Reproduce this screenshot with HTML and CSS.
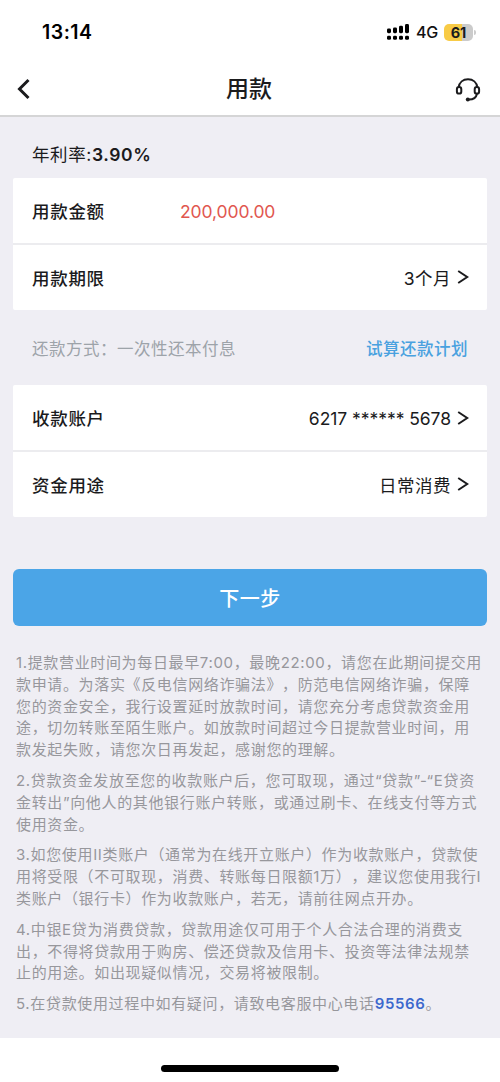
FILE: index.html
```html
<!DOCTYPE html>
<html lang="zh-CN">
<head>
<meta charset="utf-8">
<title>用款</title>
<link rel="stylesheet" href="styles.css">
</head>
<body>
<div class="screen">
  <div class="status">
    <span class="time">13:14</span>
    <div class="indicators">
      <svg class="signal" width="23" height="16" viewBox="0 0 23 16">
        <rect x="0" y="4.6" width="4" height="4.6" rx="1.4"/><rect x="6" y="3.4" width="4" height="5.800" rx="1.4"/><rect x="12" y="1.8" width="4" height="7.4" rx="1.4"/><rect x="18" y="0" width="4" height="9.2" rx="1.4"/>
        <rect x="0" y="11.8" width="4" height="4" rx="1.4"/><rect x="6" y="11.8" width="4" height="4" rx="1.4"/><rect x="12" y="11.8" width="4" height="4" rx="1.4"/><rect x="18" y="11.8" width="4" height="4" rx="1.4"/>
      </svg>
      <span class="network">4G</span>
      <span class="battery">61</span>
      <span class="battery-tip"></span>
    </div>
  </div>
  <header class="nav">
    <svg class="back" width="14" height="22" viewBox="0 0 14 22"><path d="M11.5 2 2.5 11l9 9"/></svg>
    <h1 class="title">用款</h1>
    <svg class="headset" width="26" height="26" viewBox="0 0 26 26">
      <path d="M3.7 10.200C4.3 5.400 8 2.300 13 2.300s8.700 3.100 9.300 7.900"/>
      <rect x="1.900" y="10" width="4.400" height="6.600" rx="2.200"/>
      <rect x="19.700" y="10" width="4.400" height="6.600" rx="2.200"/>
      <path d="M22 16.700c-.8 3.800-3.700 5.900-8 5.900"/>
      <circle class="mic" cx="12.800" cy="22.400" r="2"/>
    </svg>
  </header>
  <main class="content">
    <div class="rate">年利率:<b>3.90%</b></div>
    <section class="card">
      <div class="row"><span class="label">用款金额</span><span class="amount">200,000.00</span></div>
      <div class="row"><span class="label">用款期限</span><span class="value">3个月</span><svg class="chevron" width="12" height="16" viewBox="0 0 12 16"><path d="m1.200 2 9 6-9 6"/></svg></div>
    </section>
    <div class="method"><span>还款方式：一次性还本付息</span><a class="plan">试算还款计划</a></div>
    <section class="card">
      <div class="row"><span class="label">收款账户</span><span class="value account">6217 ****** 5678</span><svg class="chevron" width="12" height="16" viewBox="0 0 12 16"><path d="m1.200 2 9 6-9 6"/></svg></div>
      <div class="row"><span class="label">资金用途</span><span class="value">日常消费</span><svg class="chevron" width="12" height="16" viewBox="0 0 12 16"><path d="m1.200 2 9 6-9 6"/></svg></div>
    </section>
    <button class="next">下一步</button>
    <div class="notes">
      <p>1.提款营业时间为每日最早7:00，最晚22:00，请您在此期间提交用<br>款申请。为落实《反电信网络诈骗法》，防范电信网络诈骗，保障<br>您的资金安全，我行设置延时放款时间，请您充分考虑贷款资金用<br>途，切勿转账至陌生账户。如放款时间超过今日提款营业时间，用<br>款发起失败，请您次日再发起，感谢您的理解。</p>
      <p>2.贷款资金发放至您的收款账户后，您可取现，通过“贷款”-“E贷资<br>金转出”向他人的其他银行账户转账，或通过刷卡、在线支付等方式<br>使用资金。</p>
      <p>3.如您使用II类账户（通常为在线开立账户）作为收款账户，贷款使<br>用将受限（不可取现，消费、转账每日限额1万），建议您使用我行I<br>类账户（银行卡）作为收款账户，若无，请前往网点开办。</p>
      <p>4.中银E贷为消费贷款，贷款用途仅可用于个人合法合理的消费支<br>出，不得将贷款用于购房、偿还贷款及信用卡、投资等法律法规禁<br>止的用途。如出现疑似情况，交易将被限制。</p>
      <p>5.在贷款使用过程中如有疑问，请致电客服中心电话<a class="phone">95566</a>。</p>
    </div>
  </main>
  <footer class="home"><span class="home-bar"></span></footer>
</div>
</body>
</html>
```

FILE: styles.css
```css
* { box-sizing: border-box; }
body {
  margin: 0;
  background: #fff;
  color: #1b1b1d;
  font-family: Inter, "Noto Sans CJK SC", sans-serif;
  text-spacing-trim: space-all;
}
.screen { width: 500px; height: 1082px; display: flex; flex-direction: column; overflow: hidden; }
.status { height: 62px; padding: 2px 24px 0 42px; display: flex; align-items: center; justify-content: space-between; }
.time { font-size: 19.5px; font-weight: 600; color: #000; letter-spacing: .5px; }
.indicators { display: flex; align-items: center; }
.signal { margin-right: 6px; }
.network { width: 28px; font-size: 16px; font-weight: 500; color: #111; letter-spacing: -.3px; }
.battery {
  width: 29px; height: 17px; border-radius: 5px;
  background: linear-gradient(90deg, #f8cb46 61%, #cbcbcb 61%);
  font-size: 14.5px; line-height: 17px; font-weight: 700; text-align: center;
}
.battery-tip { width: 2px; height: 5px; margin-left: 1px; border-radius: 0 2px 2px 0; background: #ccc; }
.nav {
  height: 55px; padding: 0 19px 0 17px; border-bottom: 2px solid #d5d5d6;
  display: grid; grid-template-columns: 26px 1fr 26px; align-items: center;
}
.back, .headset, .chevron { fill: none; stroke: #1b1b1d; stroke-width: 2; }
.back { stroke-width: 3; }
.headset { margin-top: 2px; }
.headset .mic { fill: #1b1b1d; stroke: none; }
.title { margin: 0; text-align: center; font-size: 23px; line-height: 30px; font-weight: 500; }
.content { height: 921px; padding: 20px 13px 0; background: #efeef4; }
.rate { height: 41px; padding-left: 19px; font-size: 17.500px; line-height: 35px; letter-spacing: .6px; white-space: nowrap; }
.rate b { font-weight: 600; }
.card { height: 132px; background: #fff; border-radius: 2px; }
.row { height: 65px; padding: 0 18px 0 19px; display: flex; align-items: center; }
.row + .row { height: 67px; padding-bottom: 1px; border-top: 2px solid #ececef; }
.label { width: 148px; font-size: 17.500px; letter-spacing: .7px; font-weight: 500; }
.amount { padding-top: 2px; color: #e1564e; font-size: 17.500px; letter-spacing: -.1px; }
.value { margin-left: auto; margin-right: 6px; font-size: 17.500px; letter-spacing: .5px; }
.account { padding-top: 2px; letter-spacing: -.05px; }
.method { height: 75px; padding: 0 19px; display: flex; align-items: center; justify-content: space-between; color: #9da3a9; font-size: 16.500px; letter-spacing: .5px; }
.plan { color: #49a1df; font-weight: 500; }
.next {
  display: block; width: 100%; height: 57px; margin: 52px 0 26px; padding: 0; border: 0; border-radius: 6px;
  background: #4ba5e7; color: #fff; font: 500 20px Inter, "Noto Sans CJK SC", sans-serif; letter-spacing: .5px;
}
.notes { padding-left: 3px; color: #97979c; font-size: 15px; line-height: 21.800px; letter-spacing: .65px; white-space: nowrap; }
.notes p { margin: 0 0 9px; }
.phone { color: #3c68cd; font-weight: 600; }
.home { height: 44px; display: flex; justify-content: center; padding-top: 27px; }
.home-bar { width: 178px; height: 7px; border-radius: 4px; background: #000; }
```
